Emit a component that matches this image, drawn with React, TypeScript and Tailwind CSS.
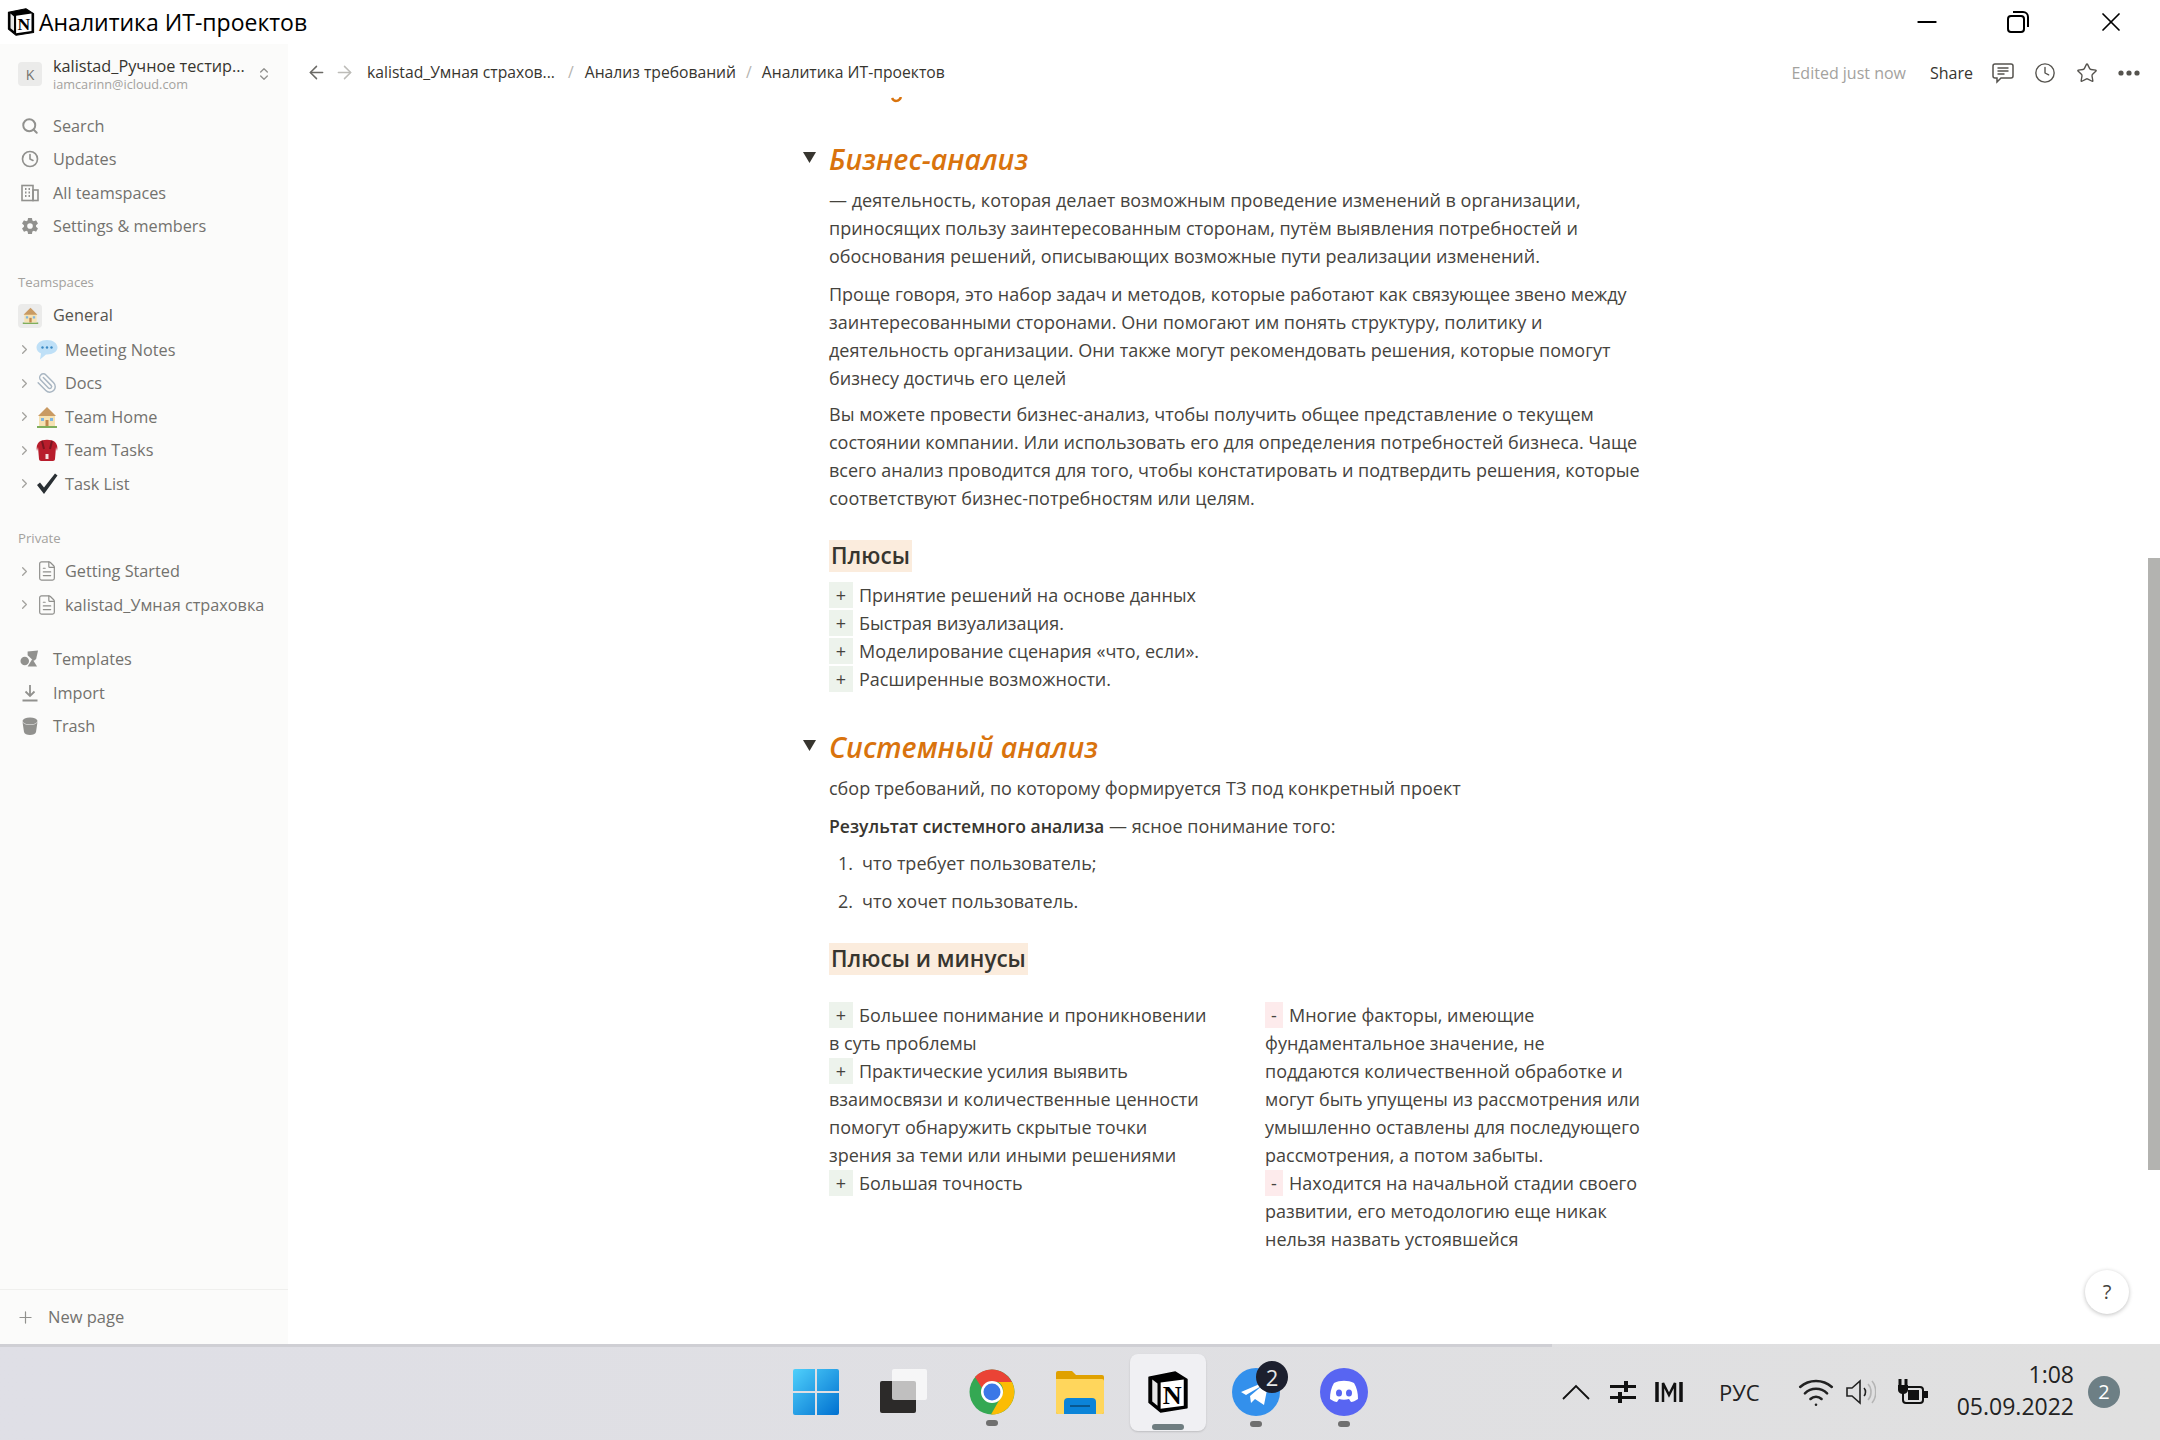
import { ReactNode } from "react";
import { ArrowLeft, ArrowRight, ChevronRight, Clock, Plus, Search, Star, Wifi, X, Minus, Paperclip, FileText, ChevronsUpDown } from "lucide-react";
import { IoSettingsSharp } from "react-icons/io5";

const NotionLogo = ({ size }: { size: number }) => (
    <svg width={size} height={size} viewBox="0 0 40 40">
        <path d="M2 6 L27 1 L38 8 L38 35 L13 39 L2 30 Z" fill="#000" stroke="#000" strokeWidth="1.500" strokeLinejoin="round" />
        <path d="M13 11 L35 8 L35 33 L13 36 Z" fill="#fff" />
        <path d="M5 8 L10 12 L10 33 L5 29 Z" fill="#fff" fillOpacity="0.9" />
        <text x="24" y="31" textAnchor="middle" fontSize="25" fontWeight="700" fontFamily="'Liberation Serif', serif" fill="#000">N</text>
    </svg>
);

const NavIcon = ({ name }: { name: string }) => {
    const c = "#91918e";
    if (name === "search") return <Search size={18} color={c} strokeWidth={2.6} />;
    if (name === "updates") return <Clock size={18} color={c} strokeWidth={2.2} />;
    if (name === "settings") return <IoSettingsSharp size={18} color={c} />;
    if (name === "teams")
        return (
            <svg width="18" height="18" viewBox="0 0 18 18" fill="none" stroke={c} strokeWidth="1.6">
                <rect x="1" y="1.5" width="11" height="15" />
                <rect x="12" y="6" width="5" height="10.5" />
                <path d="M4 5h1.5M7.5 5H9M4 8.5h1.5M7.5 8.5H9M4 12h1.5M7.5 12H9" strokeWidth="2" />
            </svg>
        );
    if (name === "templates")
        return (
            <svg width="20" height="18" viewBox="0 0 20 18" fill={c}>
                <circle cx="5" cy="11" r="4.5" />
                <path d="M8 1l11-1-2 9-2.5 2L8 5z" />
                <path d="M13 9l5 8H8z" />
            </svg>
        );
    if (name === "import")
        return (
            <svg width="16" height="18" viewBox="0 0 16 18" fill="none" stroke={c} strokeWidth="1.8">
                <path d="M8 1v10M3.5 7.5L8 12l4.5-4.5M0.5 16.5h15" />
            </svg>
        );
    return (
        <svg width="16" height="18" viewBox="0 0 16 18" fill={c}>
            <ellipse cx="8" cy="4" rx="7.5" ry="3.5" />
            <path d="M0.5 5c1 2 4 3 7.500 3s6.500-1 7.500-3l-1.500 10c-.3 2-3 3-6 3s-5.700-1-6-3z" />
        </svg>
    );
};

const House = ({ size }: { size: number }) => (
    <svg width={size} height={size} viewBox="0 0 22 22">
        <path d="M1 20h20v2H1z" fill="#7fae5b" />
        <path d="M3 9h16v11H3z" fill="#f6e2b3" />
        <path d="M11 1L2 10h18z" fill="#c99a62" />
        <path d="M5 12h3v3H5zM14 12h3v3h-3z" fill="#7fb5e0" />
        <path d="M9.500 14h3v6h-3z" fill="#c0884e" />
    </svg>
);

const PageEmoji = ({ name }: { name: string }) => {
    if (name === "bubble")
        return (
            <svg width="22" height="22" viewBox="0 0 22 22">
                <path d="M11 1C5 1 0.500 4 0.500 8.500c0 3 2 5 4.500 6l-1 6 6-5h1c6 0 10.500-3 10.500-7S17 1 11 1z" fill="#bfe0f7" />
                <circle cx="6.500" cy="8.500" r="1.200" fill="#3b88c3" />
                <circle cx="11" cy="8.500" r="1.200" fill="#3b88c3" />
                <circle cx="15.500" cy="8.500" r="1.200" fill="#3b88c3" />
            </svg>
        );
    if (name === "clip") return <Paperclip size={22} color="#a9b6c2" strokeWidth={1.6} className="-scale-x-100" />;
    if (name === "house") return <House size={22} />;
    if (name === "bag")
        return (
            <svg width="22" height="22" viewBox="0 0 22 22">
                <path d="M3 3c3-3 13-3 16 0 2 2 3 5 2 9l-1-4-1 12c0 1-1 2-2 2H5c-1 0-2-1-2-2L2 8l-1 4C0 8 1 5 3 3z" fill="#b81d2c" />
                <path d="M6 2l2 8M16 2l-2 8" stroke="#7a1520" strokeWidth="2" />
                <rect x="9.500" y="15" width="3" height="5" fill="#f4dede" />
            </svg>
        );
    if (name === "check")
        return (
            <svg width="22" height="22" viewBox="0 0 22 22">
                <path d="M1 12l3-2.500 4 5L19 0.500l2.500 2L8 21z" fill="#292f33" />
            </svg>
        );
    return <FileText size={22} color="#8f8f8c" strokeWidth={1.3} />;
};

const NavRow = ({ icon, label }: { icon: string; label: string }) => (
    <div className="flex h-[33.5px] items-center text-[16.250px] text-[#73726e]">
        <div className="flex w-[53px] justify-center pl-[20px] pr-[14px]">
            <NavIcon name={icon} />
        </div>
        {label}
    </div>
);

const PageRow = ({ icon, label }: { icon: string; label: string }) => (
    <div className="flex h-[33.5px] items-center text-[16.250px] text-[#73726e]">
        <ChevronRight size={15} color="#a3a29e" className="ml-[17px] mr-[4px] shrink-0" />
        <div className="mr-[7px] flex w-[22px] justify-center">
            <PageEmoji name={icon} />
        </div>
        <span className="whitespace-nowrap">{label}</span>
    </div>
);

const Sidebar = () => (
    <aside className="flex w-[288px] shrink-0 flex-col bg-[#fbfbfa]">
        <div className="flex h-[56px] items-center pl-[18px] pt-1">
            <div className="flex h-6 w-6 items-center justify-center rounded bg-[#ebebea] text-[14px] text-[#73726e]">K</div>
            <div className="ml-[11px] w-[204px]">
                <div className="text-[16.250px] font-medium leading-[20px] whitespace-nowrap text-[#37352f]">kalistad_Ручное тестир...</div>
                <div className="text-[12.700px] leading-[17px] text-[#a3a29e]">iamcarinn@icloud.com</div>
            </div>
            <ChevronsUpDown size={16} color="#91918e" className="-ml-[1px]" />
        </div>
        <div className="mt-[9px]">
            <NavRow icon="search" label="Search" />
            <NavRow icon="updates" label="Updates" />
            <NavRow icon="teams" label="All teamspaces" />
            <NavRow icon="settings" label="Settings & members" />
        </div>
        <div className="mt-[29px] h-5 pl-[18px] text-[13.200px] leading-5 text-[#a3a29e]">Teamspaces</div>
        <div className="mt-[6px] flex h-[35px] items-center pl-[18px] text-[16.250px] font-medium text-[#55534e]">
            <div className="mr-[11px] flex h-6 w-6 items-center justify-center rounded bg-[#ebebea]">
                <House size={17} />
            </div>
            General
        </div>
        <PageRow icon="bubble" label="Meeting Notes" />
        <PageRow icon="clip" label="Docs" />
        <PageRow icon="house" label="Team Home" />
        <PageRow icon="bag" label="Team Tasks" />
        <PageRow icon="check" label="Task List" />
        <div className="mt-[27px] h-5 pl-[18px] text-[13.200px] leading-5 text-[#a3a29e]">Private</div>
        <div className="mt-[7px]">
            <PageRow icon="doc" label="Getting Started" />
            <PageRow icon="doc" label="kalistad_Умная страховка" />
        </div>
        <div className="mt-[21px]">
            <NavRow icon="templates" label="Templates" />
            <NavRow icon="import" label="Import" />
            <NavRow icon="trash" label="Trash" />
        </div>
        <div className="mt-auto flex h-[55px] items-center border-t border-[#efefed] pl-[16px] text-[16.500px] text-[#73726e]">
            <Plus size={19} color="#91918e" strokeWidth={1.5} className="mr-[13px]" />
            New page
        </div>
    </aside>
);

const Topbar = () => (
    <div className="flex h-[53px] shrink-0 items-center pt-[4px] text-[15.700px] text-[#37352f]">
        <ArrowLeft size={21} color="#6b6a66" strokeWidth={1.7} className="ml-[18px]" />
        <ArrowRight size={21} color="#bdbcb8" strokeWidth={1.7} className="ml-[7px]" />
        <span className="ml-[12px] whitespace-nowrap">kalistad_Умная страхов...</span>
        <span className="ml-[13px] text-[#b4b3af]">/</span>
        <span className="ml-[11px] whitespace-nowrap">Анализ требований</span>
        <span className="ml-[10px] text-[#b4b3af]">/</span>
        <span className="ml-[10px] whitespace-nowrap">Аналитика ИТ-проектов</span>
        <span className="ml-auto whitespace-nowrap text-[16px] text-[#a3a29e]">Edited just now</span>
        <span className="ml-[24px] text-[16px]">Share</span>
        <svg width="22" height="22" viewBox="0 0 22 22" fill="none" stroke="#55534e" strokeWidth="1.500" className="ml-[19px]">
            <path d="M3 2h16c1 0 2 1 2 2v10c0 1-1 2-2 2H9l-4 4v-4H3c-1 0-2-1-2-2V4c0-1 1-2 2-2z" />
            <path d="M5.500 6h11M5.500 9h11M5.500 12h7" />
        </svg>
        <Clock size={22} color="#55534e" strokeWidth={1.500} className="ml-[20px]" />
        <Star size={22} color="#55534e" strokeWidth={1.500} className="ml-[20px]" />
        <svg width="22" height="6" viewBox="0 0 22 6" fill="#55534e" className="ml-[20px] mr-[20px]">
            <circle cx="3" cy="3" r="2.600" />
            <circle cx="11" cy="3" r="2.600" />
            <circle cx="19" cy="3" r="2.600" />
        </svg>
    </div>
);

const Lines = ({ lines, className = "" }: { lines: ReactNode[]; className?: string }) => (
    <div className={className}>
        {lines.map((line, i) => (
            <div key={i} className="h-7 whitespace-nowrap">
                {line}
            </div>
        ))}
    </div>
);

const Pro = () => <span className="mr-[6px] inline-block h-[26px] w-6 bg-[#edf3ec] text-center leading-[26px]">+</span>;
const Con = () => <span className="mr-[6px] inline-block h-[26px] w-[18px] bg-[#fdebec] text-center leading-[26px]">-</span>;

const ToggleHeading = ({ title, className = "" }: { title: string; className?: string }) => (
    <div className={`relative flex h-10 items-center text-[28.500px] font-semibold italic text-[#d9730d] ${className}`}>
        <span className="absolute -left-[26px] top-[13px] text-[0px]">
            <svg width="13" height="11" viewBox="0 0 13 11">
                <path d="M0 0h13L6.500 11z" fill="#37352f" />
            </svg>
        </span>
        {title}
    </div>
);

const Subhead = ({ title }: { title: string }) => (
    <div className="h-8 w-fit bg-[#fbecdd] px-[2px] text-[22.500px] font-semibold leading-8 text-[#37352f]">{title}</div>
);

const Content = () => (
    <div className="relative min-h-0 flex-1 overflow-hidden pl-[541px] text-[18px] text-[#45433d]">
        <svg width="12" height="7" viewBox="0 0 12 7" className="block ml-[62px]">
            <path d="M1 1c2 4 7 4 9-1" fill="none" stroke="#d9730d" strokeWidth="2.500" />
        </svg>
        <ToggleHeading title="Бизнес-анализ" className="mt-[35px]" />
        <Lines
            className="mt-[8px]"
            lines={[
                "— деятельность, которая делает возможным проведение изменений в организации,",
                "приносящих пользу заинтересованным сторонам, путём выявления потребностей и",
                "обоснования решений, описывающих возможные пути реализации изменений.",
            ]}
        />
        <Lines
            className="mt-[10px]"
            lines={[
                "Проще говоря, это набор задач и методов, которые работают как связующее звено между",
                "заинтересованными сторонами. Они помогают им понять структуру, политику и",
                "деятельность организации. Они также могут рекомендовать решения, которые помогут",
                "бизнесу достичь его целей",
            ]}
        />
        <Lines
            className="mt-[8px]"
            lines={[
                "Вы можете провести бизнес-анализ, чтобы получить общее представление о текущем",
                "состоянии компании. Или использовать его для определения потребностей бизнеса. Чаще",
                "всего анализ проводится для того, чтобы констатировать и подтвердить решения, которые",
                "соответствуют бизнес-потребностям или целям.",
            ]}
        />
        <div className="mt-[27px]">
            <Subhead title="Плюсы" />
        </div>
        <Lines
            className="mt-[10px]"
            lines={[
                <><Pro />Принятие решений на основе данных</>,
                <><Pro />Быстрая визуализация.</>,
                <><Pro />Моделирование сценария «что, если».</>,
                <><Pro />Расширенные возможности.</>,
            ]}
        />
        <ToggleHeading title="Системный анализ" className="mt-[33px]" />
        <Lines className="mt-[8px]" lines={["сбор требований, по которому формируется ТЗ под конкретный проект"]} />
        <Lines
            className="mt-[10px]"
            lines={[<><b className="text-[17.600px] font-semibold text-[#37352f]">Результат системного анализа</b> — ясное понимание того:</>]}
        />
        <div className="mt-[9px] flex h-7 pl-[9px]">
            <span className="w-[24px]">1.</span>что требует пользователь;
        </div>
        <div className="mt-[10px] flex h-7 pl-[9px]">
            <span className="w-[24px]">2.</span>что хочет пользователь.
        </div>
        <div className="mt-[27px]">
            <Subhead title="Плюсы и минусы" />
        </div>
        <div className="mt-[27px] flex">
            <Lines
                className="w-[436px]"
                lines={[
                    <><Pro />Большее понимание и проникновении</>,
                    "в суть проблемы",
                    <><Pro />Практические усилия выявить</>,
                    "взаимосвязи и количественные ценности",
                    "помогут обнаружить скрытые точки",
                    "зрения за теми или иными решениями",
                    <><Pro />Большая точность</>,
                ]}
            />
            <Lines
                lines={[
                    <><Con />Многие факторы, имеющие</>,
                    "фундаментальное значение, не",
                    "поддаются количественной обработке и",
                    "могут быть упущены из рассмотрения или",
                    "умышленно оставлены для последующего",
                    "рассмотрения, а потом забыты.",
                    <><Con />Находится на начальной стадии своего</>,
                    "развитии, его методологию еще никак",
                    "нельзя назвать устоявшейся",
                ]}
            />
        </div>
        {/* help button floats over the page */}
        <div className="absolute bottom-[30px] right-[31px] flex h-11 w-11 items-center justify-center rounded-full bg-white text-[20px] shadow-[0_1px_4px_rgba(0,0,0,0.25)]">?</div>
    </div>
);

const Running = () => <div className="absolute -bottom-[11px] left-1/2 h-[6px] w-3 -translate-x-1/2 rounded-full bg-[#6f6f6f]" />;

const Dock = () => (
    <div className="flex h-full items-center pl-[793px]">
        <svg width="46" height="46" viewBox="0 0 46 46">
            <defs>
                <linearGradient id="win" x1="0" y1="0" x2="1" y2="1">
                    <stop offset="0" stopColor="#4fd0fb" />
                    <stop offset="1" stopColor="#0070d0" />
                </linearGradient>
            </defs>
            <path d="M0 2a2 2 0 012-2h20v22H0zM24 0h20a2 2 0 012 2v20H24zM0 24h22v22H2a2 2 0 01-2-2zM24 24h22v20a2 2 0 01-2 2H24z" fill="url(#win)" />
        </svg>
        <svg width="48" height="46" viewBox="0 0 48 46" className="ml-[41px]">
            <rect x="0" y="12" width="36" height="32" rx="2" fill="#2c2a29" />
            <rect x="12" y="0" width="35" height="31" rx="2" fill="#fff" fillOpacity="0.7" />
        </svg>
        <div className="relative ml-[41px] h-[46px] w-[46px]">
            <svg width="46" height="46" viewBox="0 0 46 46">
                <circle cx="23" cy="23" r="22.500" fill="#34a853" />
                <path d="M23 .5A22.500 22.500 0 0 1 43 13H23a10 10 0 0 0-9.500 7L6 8A22.500 22.500 0 0 1 23 .5z" fill="#ea4335" />
                <path d="M43 13a22.500 22.500 0 0 1-21 32.500L32 28a10 10 0 0 0-3-15z" fill="#fbbc04" />
                <circle cx="23" cy="23" r="11" fill="#fff" />
                <circle cx="23" cy="23" r="8.500" fill="#3b78e7" />
            </svg>
            <Running />
        </div>
        <svg width="48" height="44" viewBox="0 0 48 44" className="ml-[41px]">
            <path d="M0 3a2 2 0 012-2h14l4 4h26a2 2 0 012 2v35a2 2 0 01-2 2H2a2 2 0 01-2-2z" fill="#e0a100" />
            <path d="M0 9h46a2 2 0 012 2v31a2 2 0 01-2 2H2a2 2 0 01-2-2z" fill="#ffd65c" />
            <path d="M8 44V32a4 4 0 014-4h24a4 4 0 014 4v12z" fill="#0b84d8" />
            <path d="M14 36h20" stroke="#08588f" strokeWidth="2" />
        </svg>
        <div className="relative ml-[26px] flex h-[77px] w-[76px] items-center justify-center rounded-lg bg-[#f0f0f3] shadow-[0_1px_2px_rgba(0,0,0,0.15)]">
            <NotionLogo size={42} />
            <div className="absolute bottom-[1px] left-[22px] h-[6px] w-8 rounded-full bg-[#6f7d80]" />
        </div>
        <div className="relative ml-[26px] h-12 w-12">
            <svg width="48" height="48" viewBox="0 0 48 48">
                <circle cx="24" cy="24" r="24" fill="#3390ec" />
                <path d="M9 24l28-12-5 25-9-6-4 4-1-7 13-11-17 10z" fill="#fff" />
            </svg>
            <div className="absolute -right-[8px] -top-[7px] flex h-8 w-8 items-center justify-center rounded-full bg-[#1c1f2e] text-[22px] text-[#e6e6e6]">2</div>
            <Running />
        </div>
        <div className="relative ml-[40px] h-12 w-12">
            <svg width="48" height="48" viewBox="0 0 48 48">
                <circle cx="24" cy="24" r="24" fill="#5865f2" />
                <path d="M14 15c6-3 14-3 20 0 3 5 4 10 4 16-3 2-5 3-7 3l-2-3c-3 1-7 1-10 0l-2 3c-2 0-4-1-7-3 0-6 1-11 4-16z" fill="#fff" />
                <ellipse cx="19" cy="25" rx="3" ry="3.500" fill="#5865f2" />
                <ellipse cx="29" cy="25" rx="3" ry="3.500" fill="#5865f2" />
            </svg>
            <Running />
        </div>
    </div>
);

const Tray = () => (
    <div className="absolute right-[40px] top-0 flex h-full items-center text-[#222]">
        <svg width="28" height="16" viewBox="0 0 28 16" fill="none" stroke="#111" strokeWidth="1.800">
            <path d="M1 15L14 2l13 13" />
        </svg>
        <svg width="28" height="24" viewBox="0 0 28 24" fill="#111" className="ml-[19px]">
            <path d="M1 5h14v3H1zM19 5h8v3h-8zM15 1h4v11h-4zM1 16h8v3H1zM13 16h14v3H13zM9 12h4v11H9z" />
        </svg>
        <svg width="28" height="24" viewBox="0 0 28 24" fill="none" stroke="#111" className="ml-[18px]">
            <path d="M2 2v20" strokeWidth="3.500" />
            <path d="M8 22V3l6 12 6-12v19" strokeWidth="2.500" />
            <path d="M26 2v20" strokeWidth="3.500" />
        </svg>
        <span className="ml-[36px] text-[22px]">РУС</span>
        <Wifi size={38} strokeWidth={1.600} className="ml-[37px]" />
        <svg width="30" height="28" viewBox="0 0 30 28" fill="none" className="ml-[11px]">
            <path d="M1 10h5l8-7v22l-8-7H1z" stroke="#222" strokeWidth="1.600" />
            <path d="M18 10c2 2 2 6 0 8" stroke="#222" strokeWidth="1.600" />
            <path d="M22 6c4 4 4 12 0 16M26 3c5 6 5 16 0 22" stroke="#b5b5b5" strokeWidth="1.600" />
        </svg>
        <svg width="34" height="28" viewBox="0 0 34 28" fill="none" className="ml-[19px]">
            <path d="M5 1v6M11 1v6" stroke="#111" strokeWidth="3" />
            <path d="M3 7h10v5c0 2-2 4-5 4S3 14 3 12z" fill="#111" />
            <rect x="8" y="9" width="20" height="16" rx="3" stroke="#111" strokeWidth="2" />
            <rect x="13" y="12" width="11" height="10" fill="#111" />
            <rect x="29" y="13" width="4" height="7" fill="#111" />
        </svg>
        <div className="ml-[28px] pb-1 text-right text-[23px] leading-[32px]">
            <div>1:08</div>
            <div>05.09.2022</div>
        </div>
        <div className="ml-[14px] flex h-8 w-8 items-center justify-center rounded-full bg-[#6d7f85] text-[20px] text-white">2</div>
    </div>
);

export default function App() {
    return (
        <div className="flex h-[1440px] w-[2160px] flex-col overflow-hidden bg-white font-['Open_Sans',sans-serif]">
            <div className="flex h-11 shrink-0 items-center bg-white pl-[7px] text-[23px] text-black">
                <NotionLogo size={28} />
                <span className="ml-[4px]">Аналитика ИТ-проектов</span>
                <Minus size={30} strokeWidth={1.500} className="ml-auto" />
                <svg width="22" height="22" viewBox="0 0 22 22" fill="none" stroke="#000" strokeWidth="2" className="ml-[65px]">
                    <rect x="1" y="5" width="16" height="16" rx="3" />
                    <path d="M6 1h10a5 5 0 015 5v10" />
                </svg>
                <X size={32} strokeWidth={1.300} className="ml-[66px] mr-[33px]" />
            </div>
            <div className="flex min-h-0 flex-1">
                <Sidebar />
                <main className="relative flex min-w-0 flex-1 flex-col">
                    <Topbar />
                    <Content />
                    <div className="absolute right-0 top-[514px] h-[612px] w-3 bg-[#b3b3b0]" />
                </main>
            </div>
            <footer className="relative h-[96px] shrink-0 bg-gradient-to-r from-[#dfdfe6] to-[#e0e0e0]">
                <div className="absolute left-0 top-0 h-[3px] w-[1552px] bg-[#cfcfd4]" />
                <Dock />
                <Tray />
            </footer>
        </div>
    );
}
